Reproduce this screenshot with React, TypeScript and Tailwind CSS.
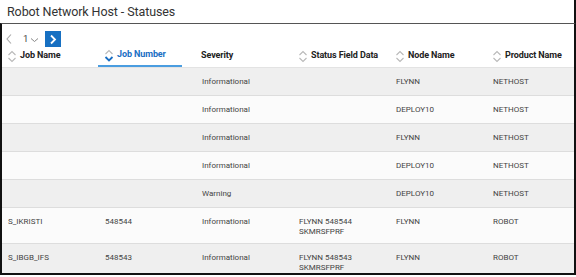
const font = { fontFamily: "Roboto, 'Liberation Sans', sans-serif" };

type Row = {
  job: string;
  num: string;
  sev: string;
  status: string[];
  node: string;
  product: string;
};

const rows: Row[] = [
  { job: "", num: "", sev: "Informational", status: [], node: "FLYNN", product: "NETHOST" },
  { job: "", num: "", sev: "Informational", status: [], node: "DEPLOY10", product: "NETHOST" },
  { job: "", num: "", sev: "Informational", status: [], node: "FLYNN", product: "NETHOST" },
  { job: "", num: "", sev: "Informational", status: [], node: "DEPLOY10", product: "NETHOST" },
  { job: "", num: "", sev: "Warning", status: [], node: "DEPLOY10", product: "NETHOST" },
  { job: "S_IKRISTI", num: "548544", sev: "Informational", status: ["FLYNN 548544", "SKMRSFPRF"], node: "FLYNN", product: "ROBOT" },
  { job: "S_IBGB_IFS", num: "548543", sev: "Informational", status: ["FLYNN 548543", "SKMRSFPRF"], node: "FLYNN", product: "ROBOT" },
];

const SortIcon = ({ active }: { active?: boolean }) => (
  <svg width="10" height="13" viewBox="0 0 10 13" fill="none" className="shrink-0">
    <path d="M1.5 5 L5 1.5 L8.5 5" stroke="#b9b9b9" strokeWidth="1.1" />
    <path
      d="M1.5 8 L5 11.5 L8.5 8"
      stroke={active ? "#1a6fc4" : "#b9b9b9"}
      strokeWidth={active ? "1.8" : "1.1"}
    />
  </svg>
);

const Header = ({ label, icon, active }: { label: string; icon?: boolean; active?: boolean }) => (
  <div className="flex items-center h-full pl-[5px]">
    <div
      className={
        "flex items-center gap-[3px] h-full pb-[3px] " +
        (active ? "border-b-2 border-[#4a9de0] pl-[6px] pr-[16px] -ml-[6px]" : "")
      }
    >
      {icon && <SortIcon active={active} />}
      <span
        className={
          "text-[9px] font-bold tracking-[-0.1px] " + (active ? "text-[#1a6fc4]" : "text-[#222]")
        }
      >
        {label}
      </span>
    </div>
  </div>
);

export default function App() {
  return (
    <div className="w-[576px] h-[277px] bg-white overflow-hidden" style={font}>
      <div className="h-[23px] flex items-center pl-[7px] pt-[1px] border-r-2 border-[#111]">
        <span className="text-[12.5px] text-[#333] tracking-[-0.1px]">Robot Network Host - Statuses</span>
      </div>
      <div className="h-[252px] overflow-hidden border-l-2 border-r-2 border-b-2 border-t border-t-[#555] border-[#111] flex flex-col">
        <div className="h-[24px] shrink-0 flex items-center pt-[6px] pl-[3px]">
          <svg width="8" height="12" viewBox="0 0 8 12">
            <path d="M6 1.5 L2 6 L6 10.5" stroke="#aaa" strokeWidth="1.1" fill="none" />
          </svg>
          <div className="flex items-center ml-[10px]">
            <span className="text-[9.5px] text-[#444]">1</span>
            <svg width="9" height="6" viewBox="0 0 9 6" className="ml-[2px] mt-[2px]">
              <path d="M1 1.5 L4.5 4.5 L8 1.5" stroke="#888" strokeWidth="1" fill="none" />
            </svg>
          </div>
          <div className="w-[16px] h-[16px] bg-[#1770c2] flex items-center justify-center ml-[6px]">
            <svg width="8" height="11" viewBox="0 0 8 11">
              <path d="M2 1.5 L6 5.5 L2 9.5" stroke="#fff" strokeWidth="1.8" fill="none" />
            </svg>
          </div>
        </div>
        <div className="shrink-0 grid grid-cols-[97px_97px_97px_97px_97px_1fr] h-[20px] border-b border-[#e3e3e3]">
          <Header label="Job Name" icon />
          <Header label="Job Number" icon active />
          <Header label="Severity" />
          <Header label="Status Field Data" icon />
          <Header label="Node Name" icon />
          <Header label="Product Name" icon />
        </div>
        {rows.map((r, i) => (
          <div
            key={i}
            className={
              "shrink-0 grid grid-cols-[97px_97px_97px_97px_97px_1fr] border-b border-[#dddddd] text-[8px] leading-[10px] text-[#444] " +
              (i % 2 === 0 ? "bg-[#efefef]" : "bg-[#fbfbfb]") +
              (r.status.length ? " pt-[9px] pb-[6px]" : " pt-[9px] pb-[8px]")
            }
          >
            <div className="pl-[6px]">{r.job}</div>
            <div className="pl-[6px]">{r.num}</div>
            <div className="pl-[6px]">{r.sev}</div>
            <div className="pl-[6px]">
              {r.status.map((s) => (
                <div key={s}>{s}</div>
              ))}
            </div>
            <div className="pl-[6px]">{r.node}</div>
            <div className="pl-[6px]">{r.product}</div>
          </div>
        ))}
      </div>
    </div>
  );
}
